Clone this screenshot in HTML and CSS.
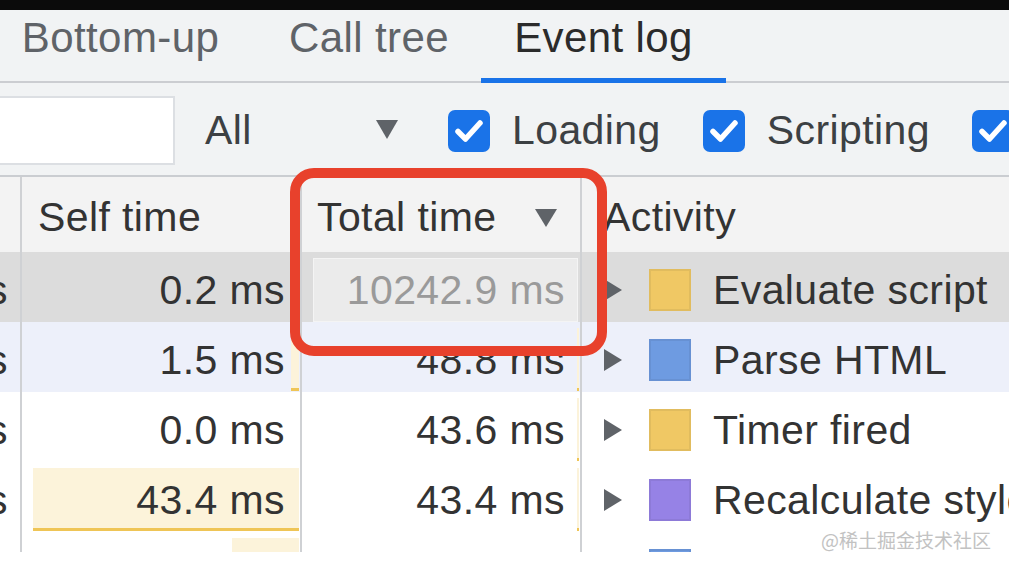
FILE: index.html
```html
<!DOCTYPE html>
<html lang="en">
<head>
<meta charset="utf-8">
<title>Performance - Event log</title>
<link rel="stylesheet" href="styles.css">
</head>
<body>
<div class="screen">
  <div class="topbar"></div>
  <div class="tabbar">
    <div class="tabs">
      <div class="tab">Bottom-up</div>
      <div class="tab">Call tree</div>
      <div class="tab active">Event log</div>
    </div>
  </div>
  <div class="toolbar">
    <div class="filter"></div>
    <div class="select"><span>All</span><span class="arrow"></span></div>
    <div class="check">
      <span class="box"><svg viewBox="0 0 42 42" width="42" height="42"><path d="M10 21.5 L17.5 29 L32 13" fill="none" stroke="#fff" stroke-width="5.5" stroke-linecap="round" stroke-linejoin="round"/></svg></span>
      <span>Loading</span>
    </div>
    <div class="check">
      <span class="box"><svg viewBox="0 0 42 42" width="42" height="42"><path d="M10 21.5 L17.5 29 L32 13" fill="none" stroke="#fff" stroke-width="5.5" stroke-linecap="round" stroke-linejoin="round"/></svg></span>
      <span>Scripting</span>
    </div>
    <div class="check">
      <span class="box"><svg viewBox="0 0 42 42" width="42" height="42"><path d="M10 21.5 L17.5 29 L32 13" fill="none" stroke="#fff" stroke-width="5.5" stroke-linecap="round" stroke-linejoin="round"/></svg></span>
    </div>
  </div>

  <div class="table">
    <div class="row head">
      <div class="cell c0"></div>
      <div class="cell c1"><span class="txt">Self time</span></div>
      <div class="cell c2"><span class="txt">Total time</span><span class="sort"></span></div>
      <div class="cell c3"><span class="txt">Activity</span></div>
    </div>

    <div class="row sel">
      <div class="cell c0"><span class="txt">10243.1 ms</span></div>
      <div class="cell c1"><span class="txt">0.2 ms</span></div>
      <div class="cell c2"><span class="hl"></span><span class="txt dim">10242.9 ms</span></div>
      <div class="cell c3"><span class="tri"></span><span class="sq yellow"></span><span class="txt">Evaluate script</span></div>
    </div>

    <div class="row hov">
      <div class="cell c0"><span class="txt">50.3 ms</span></div>
      <div class="cell c1"><span class="bar" style="width:8px"></span><span class="txt">1.5 ms</span></div>
      <div class="cell c2"><span class="bar" style="width:2px"></span><span class="txt">48.8 ms</span></div>
      <div class="cell c3"><span class="tri"></span><span class="sq blue"></span><span class="txt">Parse HTML</span></div>
    </div>

    <div class="row">
      <div class="cell c0"><span class="txt">43.6 ms</span></div>
      <div class="cell c1"><span class="txt">0.0 ms</span></div>
      <div class="cell c2"><span class="bar" style="width:2px"></span><span class="txt">43.6 ms</span></div>
      <div class="cell c3"><span class="tri"></span><span class="sq yellow"></span><span class="txt">Timer fired</span></div>
    </div>

    <div class="row">
      <div class="cell c0"><span class="txt">43.4 ms</span></div>
      <div class="cell c1"><span class="bar" style="width:266px"></span><span class="txt">43.4 ms</span></div>
      <div class="cell c2"><span class="bar" style="width:2px"></span><span class="txt">43.4 ms</span></div>
      <div class="cell c3"><span class="tri"></span><span class="sq purple"></span><span class="txt">Recalculate style</span></div>
    </div>

    <div class="row">
      <div class="cell c0"></div>
      <div class="cell c1"><span class="bar" style="width:67px"></span></div>
      <div class="cell c2"></div>
      <div class="cell c3"><span class="tri"></span><span class="sq blue"></span></div>
    </div>
  </div>

  <div class="footer"></div>

  <div class="callout"></div>
  <div class="watermark">@稀土掘金技术社区</div>
</div>
</body>
</html>
```

FILE: styles.css
```css
html, body {
  margin: 0;
  padding: 0;
  background: #fff;
}

.screen {
  position: relative;
  width: 1009px;
  height: 568px;
  overflow: hidden;
  font-family: "Liberation Sans", Arial, sans-serif;
  font-size: 41px;
  letter-spacing: 0.4px;
  color: #333;
}

.topbar {
  height: 10px;
  background: #0b0b0b;
}

/* ---------- tabs ---------- */
.tabbar {
  height: 73px;
  box-sizing: border-box;
  background: #f1f3f4;
  border-bottom: 2px solid #cbcdd1;
}

.tabs {
  display: grid;
  grid-template-columns: 273px 224px 245px;
  margin-left: -16px;
  height: 71px;
}

.tab {
  position: relative;
  text-align: center;
  padding-top: 4px;
  line-height: 47px;
  font-size: 42px;
  color: #5f6368;
  white-space: nowrap;
}

.tab.active {
  color: #2b2b2b;
}

.tab.active::after {
  content: "";
  position: absolute;
  left: 0;
  right: 0;
  bottom: -2px;
  height: 5px;
  background: #1a73e8;
}

/* ---------- toolbar ---------- */
.toolbar {
  display: flex;
  align-items: center;
  height: 94px;
  box-sizing: border-box;
  padding-top: 3px;
  background: #f1f3f4;
  border-bottom: 2px solid #cacdd1;
  color: #3c4043;
  line-height: 47px;
  white-space: nowrap;
}

.filter {
  flex: none;
  width: 177px;
  height: 69px;
  margin-left: -2px;
  box-sizing: border-box;
  background: #fff;
  border: 2px solid #dcdfe3;
}

.select {
  flex: none;
  width: 193px;
  margin-left: 30px;
  display: flex;
  align-items: center;
  justify-content: space-between;
}

.arrow {
  width: 0;
  height: 0;
  border-left: 11.5px solid transparent;
  border-right: 11.5px solid transparent;
  border-top: 19px solid #5f6368;
  margin-top: -2px;
}

.check {
  flex: none;
  display: flex;
  align-items: center;
  gap: 22px;
  margin-left: 42px;
}

.select + .check {
  margin-left: 50px;
}

.box {
  flex: none;
  width: 42px;
  height: 42px;
  border-radius: 7px;
  background: #1a73e8;
  display: flex;
}

/* ---------- table ---------- */
.table {
  height: 375px;
  overflow: hidden;
  background: #fff;
}

.row {
  display: grid;
  grid-template-columns: 22px 280px 280px 1fr;
  height: 70px;
}

.row.head {
  height: 75px;
  background: #f3f3f3;
}

.row.sel {
  background: #dcdcdc;
}

.row.hov {
  background: #edf0fa;
}

.cell {
  position: relative;
  display: flex;
  align-items: center;
  justify-content: flex-end;
  box-sizing: border-box;
  padding: 6px 15px 0 0;
  border-right: 2px solid #cfd1d4;
  overflow: hidden;
  white-space: nowrap;
  min-width: 0;
}

.cell.c0 {
  padding-right: 12px;
}

.cell.c3 {
  justify-content: flex-start;
  padding: 6px 0 0 22px;
  border-right: none;
}

.head .cell {
  justify-content: flex-start;
  padding-top: 5px;
}

.head .c1 {
  padding-left: 16px;
}

.head .c2 {
  padding-left: 15px;
  padding-right: 23px;
}

.head .c3 {
  padding-left: 21px;
}

.txt {
  position: relative;
  flex: none;
}

.txt.dim {
  color: #9a9a9a;
}

.sort {
  margin-left: auto;
  width: 0;
  height: 0;
  border-left: 11px solid transparent;
  border-right: 11px solid transparent;
  border-top: 18px solid #5f6368;
  margin-top: 2px;
}

.hl {
  position: absolute;
  left: 11px;
  right: 2px;
  top: 6px;
  bottom: 0;
  background: #ebebeb;
  border: 1px solid #f4f4f4;
}

.bar {
  position: absolute;
  right: 1px;
  top: 6px;
  bottom: 1px;
  background: #fcf3da;
  border-bottom: 3px solid #efc556;
}

.tri {
  flex: none;
  width: 0;
  height: 0;
  border-left: 18px solid #5f6368;
  border-top: 11px solid transparent;
  border-bottom: 11px solid transparent;
  margin-right: 27px;
}

.sq {
  flex: none;
  width: 42px;
  height: 42px;
  box-sizing: border-box;
  border: 2px solid rgba(0, 0, 0, 0.06);
  margin-right: 22px;
}

.sq.yellow { background: #f0c864; }
.sq.blue { background: #6e9be1; }
.sq.purple { background: #9682e6; }

.footer {
  height: 16px;
  background: #fff;
}

/* ---------- overlays ---------- */
.callout {
  position: absolute;
  left: 290px;
  top: 168px;
  width: 317px;
  height: 188px;
  box-sizing: border-box;
  border: 10px solid #e8412c;
  border-radius: 24px;
}

.watermark {
  position: absolute;
  right: 18px;
  top: 528px;
  font-family: "Noto Sans CJK SC", "Liberation Sans", sans-serif;
  font-size: 19px;
  letter-spacing: 0;
  line-height: 24px;
  color: #c2c2c2;
}
```
